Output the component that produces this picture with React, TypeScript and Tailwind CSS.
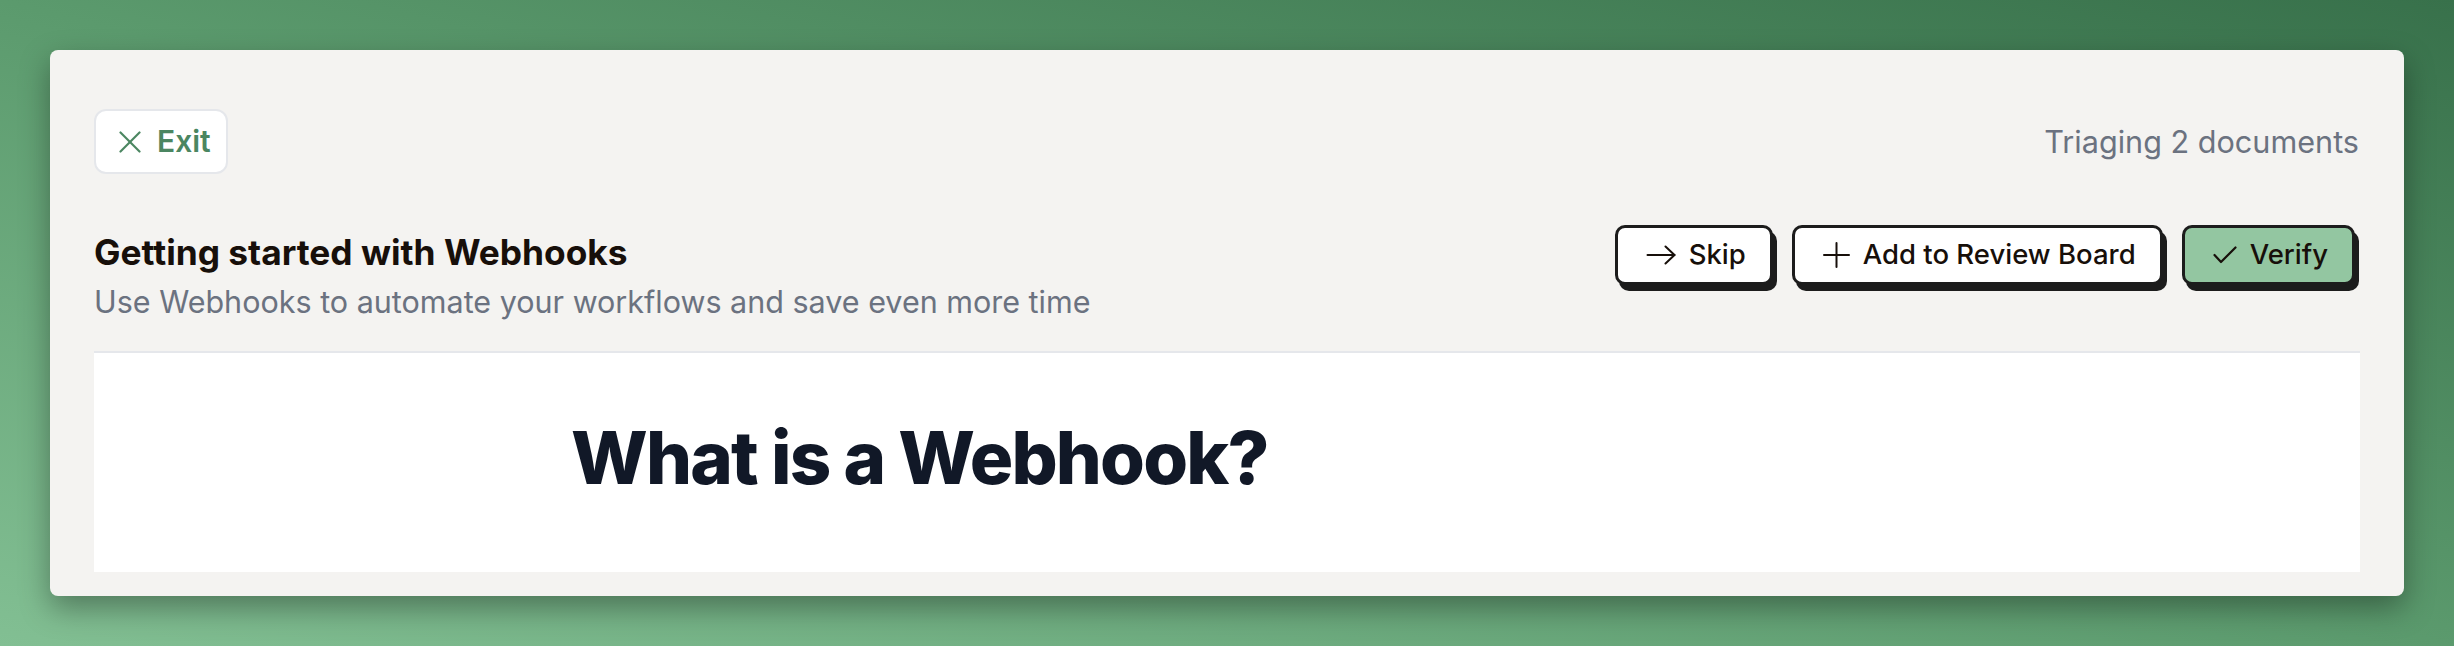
import React from 'react';

const ink = 'text-[#170f0a]';

const ArrowIcon = () => (
  <svg width="30" height="20" viewBox="0 0 30 20" fill="none" stroke="currentColor" strokeWidth="2" strokeLinecap="round" strokeLinejoin="round">
    <line x1="1.5" y1="10" x2="28.5" y2="10" />
    <polyline points="19.5,1.5 28.5,10 19.5,18.5" />
  </svg>
);

const PlusIcon = () => (
  <svg width="27" height="26" viewBox="0 0 27 26" fill="none" stroke="currentColor" strokeWidth="2" strokeLinecap="round">
    <line x1="13.5" y1="1" x2="13.5" y2="25" />
    <line x1="1" y1="13" x2="26" y2="13" />
  </svg>
);

const CheckIcon = () => (
  <svg width="24" height="18" viewBox="0 0 24 18" fill="none" stroke="currentColor" strokeWidth="2.2" strokeLinecap="round" strokeLinejoin="round">
    <polyline points="1.5,9 8,16 22.5,1.5" />
  </svg>
);

const XIcon = () => (
  <svg width="22" height="22" viewBox="0 0 22 22" fill="none" stroke="currentColor" strokeWidth="2.2" strokeLinecap="round">
    <line x1="1.5" y1="1.5" x2="20.5" y2="20.5" />
    <line x1="20.5" y1="1.5" x2="1.5" y2="20.5" />
  </svg>
);

interface ActionProps {
  icon: React.ReactNode;
  label: string;
  green?: boolean;
}

const ActionButton: React.FC<ActionProps> = ({ icon, label, green }) => (
  <button
    className={`flex items-center gap-[13px] h-[60px] pl-[28px] pr-[24px] rounded-[10px] border-[3px] border-[#1c1c1c] shadow-[4px_6px_0_0_#1c1c1c] text-[27.5px] font-medium ${ink} ${
      green ? 'bg-[#93c6a1]' : 'bg-white'
    }`}
  >
    {icon}
    <span>{label}</span>
  </button>
);

export default function App() {
  return (
    <div className="h-screen w-full p-[50px] bg-linear-to-tr from-[#82bf93] via-[#5b9a6d] to-[#38714b] font-['Inter',sans-serif]">
      <div className="h-full flex flex-col rounded-lg bg-[#f4f3f1] shadow-[0_12px_30px_rgba(0,0,0,0.35)] pt-[59px] px-[44px] pb-[24px]">
        <div className="flex items-center justify-between">
          <button className="flex items-center gap-[16px] h-[65px] pl-[23px] pr-[15px] rounded-xl border-2 border-[#e5e7eb] bg-white text-[#4b8661] text-[30px] font-semibold">
            <XIcon />
            <span>Exit</span>
          </button>
          <span className="text-[30.6px] text-[#6b7280] pr-[1px]">Triaging 2 documents</span>
        </div>

        <div className="mt-[51px] flex items-start justify-between">
          <div className="pt-[7px]">
            <h1 className={`text-[35.3px] leading-[42px] font-bold ${ink}`}>Getting started with Webhooks</h1>
            <p className="mt-[8px] text-[30.5px] leading-[40px] text-[#6b7280]">
              Use Webhooks to automate your workflows and save even more time
            </p>
          </div>
          <div className="flex items-center gap-[19px] mr-[5px]">
            <ActionButton icon={<ArrowIcon />} label="Skip" />
            <ActionButton icon={<PlusIcon />} label="Add to Review Board" />
            <ActionButton icon={<CheckIcon />} label="Verify" green />
          </div>
        </div>

        <div className="mt-[29px] flex-1 overflow-hidden bg-white border-t-2 border-[#e5e7eb]">
          <div className="max-w-[1312px] mx-auto pt-[65px]">
            <h2 className="text-[72.5px] leading-[1.1] font-extrabold tracking-tight text-[#111827]">What is a Webhook?</h2>
          </div>
        </div>
      </div>
    </div>
  );
}
